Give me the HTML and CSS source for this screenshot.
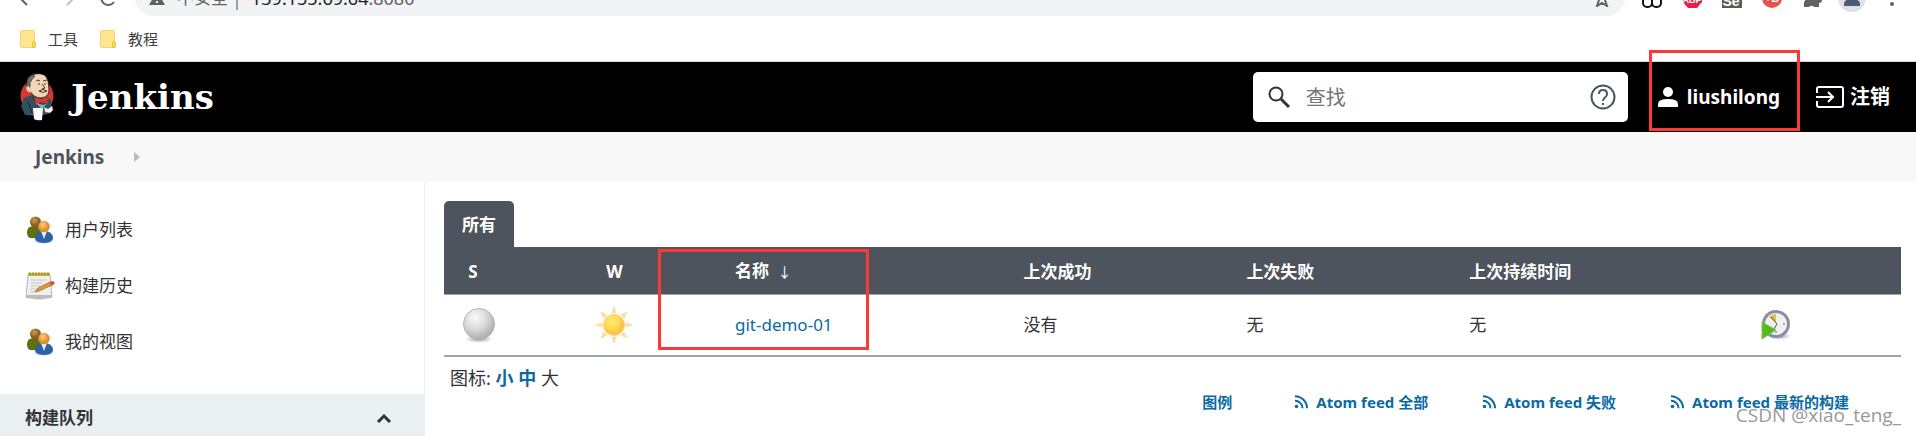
FILE: index.html
```
<!DOCTYPE html>
<html lang="zh-CN">
<head>
    <meta charset="UTF-8">
    <meta name="viewport" content="width=device-width, initial-scale=1.0">
    <title>Jenkins</title>
    <link rel="stylesheet" href="styles.css">
</head>
<body>

<!-- Shared shapes -->
<svg class="defs" width="0" height="0">
    <defs>
        <radialGradient id="brown" cx="40%" cy="35%"><stop offset="0" stop-color="#d09a55"/><stop offset="1" stop-color="#8a561a"/></radialGradient>
        <radialGradient id="orange" cx="40%" cy="35%"><stop offset="0" stop-color="#f9cc85"/><stop offset="1" stop-color="#dd8f25"/></radialGradient>
        <radialGradient id="ball" cx="38%" cy="30%" r="70%"><stop offset="0" stop-color="#fafafa"/><stop offset="0.5" stop-color="#dcdcdc"/><stop offset="1" stop-color="#adadad"/></radialGradient>
        <radialGradient id="sun" cx="40%" cy="35%"><stop offset="0" stop-color="#ffe873"/><stop offset="0.7" stop-color="#ffdb4d"/><stop offset="1" stop-color="#f8c548"/></radialGradient>
        <radialGradient id="shade"><stop offset="0" stop-color="#000" stop-opacity="0.4"/><stop offset="1" stop-color="#000" stop-opacity="0"/></radialGradient>
    </defs>
    <symbol id="people" viewBox="0 0 30 30">
        <ellipse cx="18" cy="26" rx="11" ry="3" fill="url(#shade)"/>
        <path d="M2 17q0-6 7-6 6 0 7 5l-2 7H5q-3-1-3-6z" fill="#61700e"/>
        <circle cx="10.500" cy="7" r="5.500" fill="url(#brown)"/>
        <path d="M10 24q0-8 9-8t9 8q-2 4-9 4t-9-4z" fill="#2d62ab"/>
        <path d="M16 16h6l-3 8z" fill="#e8f0fa"/>
        <circle cx="19" cy="11.500" r="5.700" fill="url(#orange)"/>
    </symbol>
    <symbol id="rss" viewBox="0 0 14 14">
        <circle cx="2.500" cy="11.500" r="1.800" fill="#0b6aa2"/>
        <path d="M1 5.700a7.500 7.500 0 0 1 7.500 7.500M1 1.300a12 12 0 0 1 12 12" fill="none" stroke="#0b6aa2" stroke-width="2"/>
    </symbol>
    <symbol id="folder" viewBox="0 0 16 18">
        <rect x="0.500" y="0.500" width="14" height="17" rx="1" fill="#ffe58f" stroke="#f6d568"/>
        <path d="M12.500 17.500v-5q0-1 1.500-1t1.500 1v4q0 1-1 1z" fill="#ffd94f" stroke="#edc23d"/>
    </symbol>
</svg>

<!-- Browser toolbar -->
<div class="toolbar">
    <button class="tool nav" aria-label="Back"><svg width="45" height="37"><path d="M27 12l-7 7 7 7M20 19h13" fill="none" stroke="#5f6368" stroke-width="2"/></svg></button>
    <button class="tool nav" aria-label="Forward"><svg width="45" height="37"><path d="M22 12l7 7-7 7M29 19H16" fill="none" stroke="#bdc1c6" stroke-width="2"/></svg></button>
    <button class="tool nav" aria-label="Reload"><svg width="45" height="37"><path d="M24 15a7 7 0 1 0 0 8" fill="none" stroke="#5f6368" stroke-width="2"/></svg></button>
    <div class="omnibox">
        <svg width="16" height="16"><path d="M8 1l8 14H0z" fill="#5f6368"/><path d="M8 6v4M8 11v2" stroke="#f1f3f4" stroke-width="2"/></svg>
        <span class="unsafe">不安全</span>
        <span class="address">139.155.69.64<span class="port">:8080</span></span>
        <svg class="star" width="18" height="18"><path d="M9 2l2 5 5 .5-4 3.500 2 6-5-3-5 3 2-6-4-3.500L7 7z" fill="none" stroke="#5f6368" stroke-width="2"/></svg>
    </div>
    <button class="tool" aria-label="Extension"><svg width="40" height="37"><g fill="none" stroke="#111" stroke-width="2"><rect x="11" y="15" width="9" height="13" rx="4"/><rect x="20" y="15" width="9" height="13" rx="4"/></g></svg></button>
    <button class="tool" aria-label="ABP"><svg width="40" height="37"><path d="M16 9h9l5 6v8l-5 6h-9l-5-6v-8z" fill="#ed1e45"/><text x="20" y="24" class="mark abp">ABP</text></svg></button>
    <button class="tool" aria-label="Selenium"><svg width="40" height="37"><path d="M10 9h20v20H10z" fill="#5b5b5b"/><text x="19" y="27" class="mark se">Se</text></svg></button>
    <button class="tool" aria-label="Blocker"><svg width="40" height="37"><circle cx="20" cy="19" r="10" fill="#e65351"/><text x="20" y="23" class="mark">+B</text></svg></button>
    <button class="tool" aria-label="Extensions"><svg width="40" height="37"><path d="M12 13h5a3 3 0 0 1 6 0h4v5a3 3 0 0 1 0 6v4h-5a3 3 0 0 0-5 0h-5v-5a3 3 0 0 0 0-5z" fill="#5f6368"/></svg></button>
    <button class="tool" aria-label="Profile"><svg width="40" height="37"><circle cx="20" cy="19" r="14" fill="#dfe1e6"/><circle cx="20" cy="15" r="5" fill="#4d5a70"/><path d="M12 27v-2q0-5 8-5t8 5v2z" fill="#4d5a70"/></svg></button>
    <button class="tool" aria-label="Menu"><svg width="40" height="37"><g fill="#5f6368"><circle cx="20" cy="13" r="2"/><circle cx="20" cy="19" r="2"/><circle cx="20" cy="25" r="2"/></g></svg></button>
</div>

<!-- Bookmarks -->
<div class="bookmarks">
    <a href="#"><svg width="16" height="18"><use href="#folder"/></svg>工具</a>
    <a href="#"><svg width="16" height="18"><use href="#folder"/></svg>教程</a>
</div>

<!-- Page header -->
<header class="header">
    <a href="#" class="logo">
        <svg width="34" height="48" viewBox="0 0 34 48">
            <circle cx="17" cy="23" r="16.500" fill="#d33833"/>
            <path d="M4 25l8-3 12 1 7 4 1 10-4 4-9 2-14-1-4-9z" fill="#335061"/>
            <path d="M8 29l4 11M27 27l-2 7M13 24l5 9 6-8" fill="none" stroke="#132531" stroke-width="1"/>
            <path d="M7 11Q6 3 15 1q11-2 13 7l1 9q0 7-8 8-7 0-11-7-5-1-3-7z" fill="#f0d6b7" stroke="#2b1b17" stroke-width="0.800"/>
            <path d="M12 2Q6 5 7 12l2 4q2-3 1-6 2-4 5-7-1-1-3-1z" fill="#6d6b6d" stroke="#2b1b17" stroke-width="0.500"/>
            <path d="M8 13q-3 1-1 5l4 2q-1-6-3-7z" fill="#f0d6b7"/>
            <path d="M16 8q2-2 4 0M23 8l4-1M18 11h2M24 11h2M22 11l3 4-3 1M19 18q4-3 8 0-4 3-8 0" fill="none" stroke="#4a342a" stroke-width="1"/>
            <path d="M14 24l7 2 6-2 1 7-6-2-6 3z" fill="#d33833"/>
            <path d="M16 30l7 2 4-1-5 5z" fill="#81b0c4"/>
            <path d="M13 35h10l-1 12q-5 1-8-1z" fill="#fff"/>
            <path d="M24 34l4 2 4-3 1 4-3 3-5-1z" fill="#f7f7f7" stroke="#777" stroke-width="0.500"/>
        </svg>
        <span>Jenkins</span>
    </a>
    <div class="header-right">
        <form class="search">
            <label for="search" aria-label="查找"><svg width="24" height="24"><circle cx="9" cy="9" r="6.500" fill="none" stroke="#333" stroke-width="2"/><path d="M14 14l8 8" stroke="#333" stroke-width="3"/></svg></label>
            <input type="text" id="search" placeholder="查找">
            <a href="#" aria-label="Help"><svg width="26" height="26"><circle cx="13" cy="13" r="11.500" fill="none" stroke="#4d545d" stroke-width="2"/><path d="M9 10q0-4 4-4t4 4q0 2-2 3.500T13 17M13 19v2" fill="none" stroke="#4d545d" stroke-width="2"/></svg></a>
        </form>
        <a href="#" class="user">
            <svg width="20" height="22"><circle cx="10" cy="6" r="5" fill="#fff"/><path d="M0 21v-3q0-5 10-5t10 5v3z" fill="#fff"/></svg>
            liushilong
            <span class="highlight highlight-user"></span>
        </a>
        <a href="#" class="logout">
            <svg width="28" height="24"><path d="M1 8V4q0-2 2-2h22q2 0 2 2v16q0 2-2 2H3q-2 0-2-2v-4M0 12h17M12 7l5 5-5 5" fill="none" stroke="#fff" stroke-width="2"/></svg>
            注销
        </a>
    </div>
</header>

<nav class="breadcrumb">
    <a href="#">Jenkins</a>
    <svg width="6" height="10"><path d="M0 0l6 5-6 5z" fill="#bbb"/></svg>
</nav>

<div class="container">
    <!-- Sidebar -->
    <aside class="sidebar">
        <div class="tasks">
            <a href="#"><svg width="30" height="30"><use href="#people"/></svg>用户列表</a>
            <a href="#">
                <svg width="30" height="30">
                    <ellipse cx="14" cy="27" rx="13" ry="2" fill="url(#shade)"/>
                    <path d="M3 4h22l2 22H1z" fill="#efefed" stroke="#b8b8b4"/>
                    <path d="M1 24h26v3H1z" fill="#bdbdb8"/>
                    <path d="M3 2h22v3H3z" fill="#c6b03a"/>
                    <path d="M5 1v3M8 1v3M11 1v3M14 1v3M17 1v3M20 1v3M23 1v3" stroke="#948225"/>
                    <path d="M6 9h16M6 12h12M6 15h9M5 18h7M5 21h5" stroke="#c8c8c8"/>
                    <path d="M10 21l3-4 12-6 2 3-13 6z" fill="#d79a38" stroke="#946320" stroke-width="0.700"/>
                    <path d="M24 11l4-1 2 2-3 3z" fill="#e0494a"/>
                </svg>
                构建历史
            </a>
            <a href="#"><svg width="30" height="30"><use href="#people"/></svg>我的视图</a>
        </div>
        <div class="pane-header">
            构建队列
            <button aria-label="Collapse"><svg width="16" height="12"><path d="M2 10l6-6 6 6" fill="none" stroke="#333" stroke-width="3"/></svg></button>
        </div>
    </aside>

    <!-- Job list -->
    <main class="main">
        <a href="#" class="tab">所有</a>
        <table class="jobs">
            <colgroup>
                <col class="col-status"><col class="col-weather"><col class="col-name">
                <col class="col-last"><col class="col-last"><col class="col-duration"><col>
            </colgroup>
            <thead>
                <tr>
                    <th class="center status">S</th>
                    <th class="center">W</th>
                    <th class="name">名称 <span class="arrow">↓</span><span class="highlight highlight-name"></span></th>
                    <th>上次成功</th>
                    <th>上次失败</th>
                    <th>上次持续时间</th>
                    <th></th>
                </tr>
            </thead>
            <tbody>
                <tr>
                    <td class="center">
                        <svg width="36" height="36"><ellipse cx="18" cy="32" rx="14" ry="4" fill="url(#shade)"/><circle cx="18" cy="17" r="15.500" fill="url(#ball)" stroke="#b5b5b5"/></svg>
                    </td>
                    <td class="center">
                        <svg width="36" height="36">
                            <path d="M16 6l2-6 2 6zM16 30l2 6 2-6zM6 16l-6 2 6 2zM30 16l6 2-6 2zM11 8L5 5l3 6zM25 8l6-3-3 6zM8 25l-3 6 6-3zM28 25l3 6-6-3z" fill="#fce0a4" stroke="#fadcA5"/>
                            <circle cx="18" cy="18" r="10.500" fill="url(#sun)" stroke="#f9d382"/>
                        </svg>
                    </td>
                    <td><a href="#">git-demo-01</a></td>
                    <td>没有</td>
                    <td>无</td>
                    <td>无</td>
                    <td>
                        <button class="build" aria-label="Build">
                            <svg width="32" height="32">
                                <ellipse cx="18" cy="27" rx="12" ry="4" fill="url(#shade)"/>
                                <circle cx="15" cy="15" r="12.500" fill="#f0f0ee" stroke="#8c8ba8" stroke-width="3"/>
                                <path d="M15 14L8 8q3-3 7-3z" fill="#e2bd55"/>
                                <path d="M10 8l6 7-3 5" fill="none" stroke="#555" stroke-width="1"/>
                                <path d="M15 22v2M22 15h2" stroke="#aaa" stroke-width="2"/>
                                <path d="M1 13l14 8L1 30z" fill="#57b81f" stroke="#7cc653"/>
                            </svg>
                        </button>
                    </td>
                </tr>
            </tbody>
        </table>

        <div class="icon-size">图标: <a href="#">小</a> <a href="#">中</a> 大</div>
        <div class="feeds">
            <a href="#" class="legend">图例</a>
            <a href="#"><svg width="14" height="14"><use href="#rss"/></svg>Atom feed 全部</a>
            <a href="#"><svg width="14" height="14"><use href="#rss"/></svg>Atom feed 失败</a>
            <a href="#"><svg width="14" height="14"><use href="#rss"/></svg>Atom feed 最新的构建</a>
        </div>
    </main>
</div>

<div class="watermark">CSDN @xiao_teng_</div>

</body>
</html>
```
FILE: styles.css
```
* {
    box-sizing: border-box;
}

body {
    margin: 0;
    height: 100vh;
    display: flex;
    flex-direction: column;
    position: relative;
    overflow: hidden;
    background-color: #fff;
    color: #333;
    font-family: "Noto Sans", "Noto Sans CJK SC", sans-serif;
    font-size: 17px;
    line-height: 24px;
}

a {
    color: #0b6aa2;
    text-decoration: none;
}

button {
    padding: 0;
    border: none;
    background: none;
    cursor: pointer;
}

svg {
    display: block;
    flex-shrink: 0;
}

.defs {
    position: absolute;
}

/* Browser toolbar, scrolled half out of the top */
.toolbar {
    display: flex;
    align-items: flex-end;
    flex-shrink: 0;
    height: 16px;
    padding-right: 4px;
    overflow: hidden;
}

.tool {
    width: 40px;
    height: 37px;
    flex-shrink: 0;
}

.nav {
    width: 45px;
}

.omnibox {
    display: flex;
    align-items: center;
    flex: 1;
    height: 37px;
    margin-right: 7px;
    padding: 0 14px;
    border-radius: 18px;
    background-color: #f1f3f4;
    color: #5f6368;
}

.unsafe {
    margin-left: 12px;
    padding-right: 8px;
    border-right: 2px solid #9aa0a6;
}

.address {
    margin-left: 13px;
    font-size: 18px;
    color: #202124;
}

.port {
    color: #5f6368;
}

.star {
    margin-left: auto;
}

.mark {
    font-size: 11px;
    font-weight: bold;
    fill: #fff;
    text-anchor: middle;
}

.abp {
    font-size: 9px;
}

.se {
    font-size: 14px;
}

/* Bookmarks */
.bookmarks {
    display: flex;
    align-items: center;
    flex-shrink: 0;
    gap: 22px;
    height: 46px;
    padding: 0 20px;
    border-bottom: 1px solid #d5dcd8;
    font-size: 15px;
}

.bookmarks a {
    display: flex;
    align-items: center;
    gap: 12px;
    color: #3c4043;
}

/* Page header */
.header {
    display: flex;
    justify-content: space-between;
    flex-shrink: 0;
    height: 70px;
    padding: 0 26px 0 20px;
    background-color: #000;
}

.header a {
    display: flex;
    align-items: center;
    color: #fff;
}

.logo {
    gap: 17px;
    font-family: "DejaVu Serif", serif;
    font-size: 34px;
    font-weight: bold;
}

.header-right {
    display: flex;
    font-size: 19px;
    font-weight: bold;
}

.search {
    display: flex;
    align-items: center;
    width: 375px;
    height: 50px;
    margin: 10px 30px 0 0;
    padding: 0 12px 0 14px;
    border-radius: 5px;
    background-color: #fff;
}

.search input {
    flex: 1;
    min-width: 0;
    margin-left: 15px;
    padding: 0;
    border: none;
    outline: none;
    font-family: inherit;
    font-size: 20px;
    color: #333;
}

.search input::placeholder {
    color: #757575;
}

.user {
    position: relative;
    gap: 9px;
    margin-right: 36px;
}

.logout {
    gap: 6px;
    font-size: 20px;
}

/* Red marker boxes */
.highlight {
    position: absolute;
    z-index: 1;
    border: 3px solid #fd3838;
    pointer-events: none;
}

.highlight-user {
    top: -12px;
    bottom: 1px;
    left: -9px;
    right: -20px;
}

.highlight-name {
    top: 2px;
    left: -57px;
    width: 211px;
    height: 101px;
}

.breadcrumb {
    display: flex;
    align-items: center;
    flex-shrink: 0;
    gap: 30px;
    height: 50px;
    padding: 0 35px;
    background-color: #f8f8f8;
    font-size: 19px;
    font-weight: bold;
}

.breadcrumb a {
    color: #4d545d;
}

.container {
    display: flex;
    flex: 1;
}

/* Sidebar */
.sidebar {
    width: 425px;
    flex-shrink: 0;
    border-right: 1px solid #eaeff2;
}

.tasks {
    padding: 20px 25px 24px;
}

.tasks a {
    display: flex;
    align-items: center;
    gap: 10px;
    height: 56px;
    color: #333;
}

.pane-header {
    display: flex;
    align-items: center;
    justify-content: space-between;
    padding: 12px 32px 12px 25px;
    background-color: #eaeff2;
    font-weight: bold;
}

/* Job list */
.main {
    flex: 1;
    padding: 19px 15px 0 19px;
}

.tab {
    display: flex;
    align-items: center;
    justify-content: center;
    width: 70px;
    height: 46px;
    padding-top: 2px;
    border-radius: 5px 5px 0 0;
    background-color: #4d545d;
    color: #fff;
    font-weight: bold;
}

.jobs {
    width: 100%;
    table-layout: fixed;
    border-spacing: 0;
    border-bottom: 2px solid #98a6b0;
}

.col-status {
    width: 4.8%;
}

.col-weather {
    width: 13.8%;
}

.col-name {
    width: 19.8%;
}

.col-last {
    width: 15.3%;
}

.col-duration {
    width: 20%;
}

.jobs th {
    height: 48px;
    padding: 2px 0 0 20px;
    border-bottom: 1px solid #98a6b0;
    background-color: #4d545d;
    color: #fff;
    text-align: left;
}

.jobs td {
    height: 60px;
    padding: 0 0 0 20px;
}

.jobs td.center {
    padding: 0;
}

.jobs th.center {
    padding-left: 0;
}

.jobs .center {
    text-align: center;
}

.jobs .status {
    padding-right: 12px;
}

.center svg {
    margin: 0 auto;
}

.jobs .name {
    position: relative;
}

.arrow {
    margin-left: 4px;
    font-size: 14px;
    font-weight: normal;
}

.build {
    display: block;
}

.icon-size {
    padding: 9px 6px 0;
    font-size: 18px;
}

.icon-size a {
    font-weight: bold;
}

.feeds {
    display: flex;
    justify-content: flex-end;
    gap: 54px;
    padding-right: 52px;
    font-size: 15px;
    font-weight: bold;
}

.feeds a {
    display: flex;
    align-items: center;
    gap: 8px;
}

.legend {
    margin-right: 8px;
}

.watermark {
    position: absolute;
    right: 15px;
    bottom: 9px;
    color: #999;
    font-family: "Open Sans", sans-serif;
    font-size: 19px;
}
```
